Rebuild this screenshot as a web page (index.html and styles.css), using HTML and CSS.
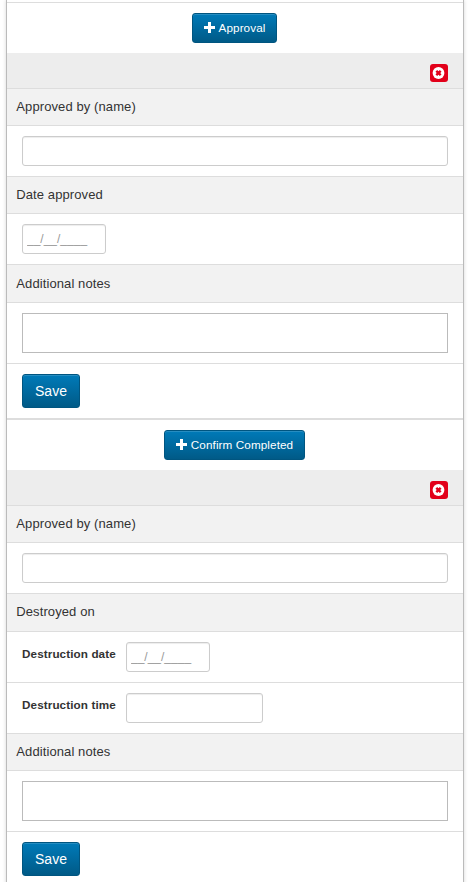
FILE: index.html
```html
<!DOCTYPE html>
<html lang="en">
<head>
<meta charset="utf-8">
<title>Approval</title>
<link rel="stylesheet" href="styles.css">
</head>
<body>
<svg class="defs" aria-hidden="true">
  <symbol id="plus" viewBox="0 0 12 12"><path fill="#fff" d="M4 0h3v4h4v3h-4v4h-3v-4h-4v-3h4z"/></symbol>
  <symbol id="remove" viewBox="0 0 18 18"><circle cx="8.5" cy="9" r="5.9" fill="#fff"/><path d="M6.3 6.8l4.4 4.4M10.7 6.8l-4.4 4.4" stroke="#e2001a" stroke-width="2.4"/></symbol>
</svg>
<main class="panel">
  <div class="top"></div>
  <section>
    <div class="action"><button class="btn btn-add"><svg class="plus"><use href="#plus"/></svg>Approval</button></div>
    <div class="toolbar"><button class="remove" aria-label="Remove"><svg><use href="#remove"/></svg></button></div>
    <div class="heading">Approved by (name)</div>
    <div class="field"><input class="input" type="text"></div>
    <div class="heading">Date approved</div>
    <div class="field"><input class="input date" type="text" placeholder="__/__/____"></div>
    <div class="heading tall low">Additional notes</div>
    <div class="field"><textarea class="notes"></textarea></div>
    <div class="field last"><button class="btn btn-save">Save</button></div>
  </section>
  <section>
    <div class="action"><button class="btn btn-add wide"><svg class="plus"><use href="#plus"/></svg>Confirm Completed</button></div>
    <div class="toolbar"><button class="remove" aria-label="Remove"><svg><use href="#remove"/></svg></button></div>
    <div class="heading">Approved by (name)</div>
    <div class="field"><input class="input" type="text"></div>
    <div class="heading tall">Destroyed on</div>
    <div class="field"><label for="ddate">Destruction date</label><input id="ddate" class="input date" type="text" placeholder="__/__/____"></div>
    <div class="field"><label for="dtime">Destruction time</label><input id="dtime" class="input time" type="text"></div>
    <div class="heading">Additional notes</div>
    <div class="field"><textarea class="notes"></textarea></div>
    <div class="field last"><button class="btn btn-save">Save</button></div>
  </section>
</main>
</body>
</html>
```
FILE: styles.css
```css
* { box-sizing: border-box; }
html { overflow: hidden; }
body {
  margin: 0;
  height: 882px;
  overflow: hidden;
  background: #fff;
  color: #333;
  font: 13px/18px "Liberation Sans", Arial, sans-serif;
  letter-spacing: .1px;
}
.defs { display: block; width: 0; height: 0; }
.panel {
  width: 458px;
  margin-left: 6px;
  border: solid #bbb;
  border-width: 0 1px;
  box-shadow: 0 0 4px rgba(0, 0, 0, .16);
}
.top { height: 3px; border-bottom: 1px solid #ddd; }
.action { height: 50px; padding: 10px 1px 0 0; text-align: center; }
.toolbar {
  display: flex;
  justify-content: flex-end;
  height: 36px;
  padding: 11px 15px 0 0;
  background: #ededed;
  border-bottom: 1px solid #ddd;
}
.remove {
  width: 18px;
  height: 18px;
  padding: 0;
  border: 0;
  border-radius: 3px;
  background: #e2001a;
}
.remove svg { display: block; width: 18px; height: 18px; }
.heading {
  height: 37px;
  padding: 9px 9.3px;
  background: #f2f2f2;
  border-bottom: 1px solid #ddd;
}
.heading.tall { height: 38px; }
.heading.low { padding-top: 10px; }
.field {
  display: flex;
  align-items: flex-start;
  padding: 10px 15px;
  border-bottom: 1px solid #ddd;
}
.field.last { border-bottom-width: 2px; }
.field label {
  width: 104px;
  padding-top: 3px;
  font-size: 11.7px;
  font-weight: bold;
}
.input {
  width: 100%;
  height: 30px;
  padding: 4px;
  border: 1px solid #ccc;
  border-radius: 3px;
  background: #fff;
  box-shadow: inset 0 1px 1px rgba(0, 0, 0, .075);
  font: 12px/20px "Liberation Sans", Arial, sans-serif;
}
.input::placeholder { color: #999; opacity: 1; }
.input.date { width: 84px; }
.input.time { width: 137px; }
.notes {
  display: block;
  width: 100%;
  height: 40px;
  border: 1px solid #bbb;
  background: #fff;
  resize: none;
}
.btn {
  border: 1px solid #005580;
  border-radius: 3px;
  background: linear-gradient(#007ab8, #005a87);
  box-shadow: inset 0 1px 0 rgba(255, 255, 255, .15);
  color: #fff;
  font-family: "Liberation Sans", Arial, sans-serif;
}
.btn-add {
  display: inline-flex;
  align-items: center;
  justify-content: center;
  width: 85px;
  height: 30px;
  padding: 0 0 1px;
  font-size: 11.7px;
  letter-spacing: .1px;
  line-height: 13px;
  vertical-align: top;
}
.btn-add.wide { width: 141px; }
.plus { width: 12px; height: 12px; margin-right: 3px; }
.btn-save { width: 58px; height: 34px; padding: 0; font-size: 14px; }
```
